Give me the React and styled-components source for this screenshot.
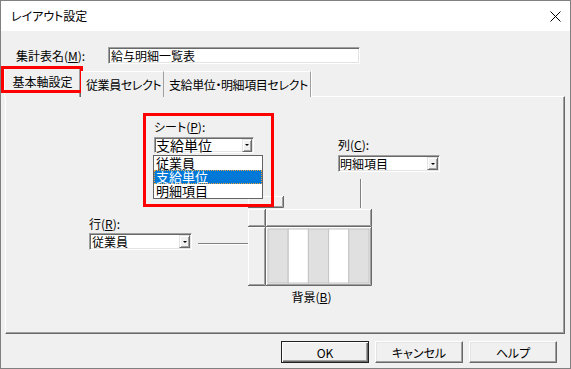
import React from 'react';
import styled, { createGlobalStyle } from 'styled-components';

const GlobalStyle = createGlobalStyle`
  html, body {
    margin: 0;
    padding: 0;
    background: #f0f0f0;
  }
  body {
    font-family: "Noto Sans CJK JP", "Noto Sans", sans-serif;
    font-size: 12px;
    color: #000;
    font-feature-settings: "palt";
  }
`;

/* window frame */
const Window = styled.div`
  width: 571px;
  height: 369px;
  box-sizing: border-box;
  border: 1px solid #808080;
  background: #f0f0f0;
  display: flex;
  flex-direction: column;
`;

const TitleBar = styled.div`
  height: 30px;
  flex: none;
  background: #fff;
  display: flex;
  align-items: center;
  justify-content: space-between;
  padding: 0 9px 0 10px;
`;

const Title = styled.span`
  line-height: 14px;
`;

const CloseIcon = () => (
  <svg width="11" height="11" viewBox="0 0 11 11">
    <path d="M0.5 0.5L10.5 10.5M10.5 0.5L0.5 10.5" stroke="#000" strokeWidth="1" fill="none" />
  </svg>
);

/* name row */
const NameRow = styled.div`
  display: flex;
  align-items: center;
  margin-top: 16px;
  padding-left: 15px;
`;

const Label = styled.div`
  width: ${(p) => (p.$w ? `${p.$w}px` : 'auto')};
  height: 14px;
  line-height: 14px;
  white-space: nowrap;
`;

const Sunken = styled.div`
  box-sizing: border-box;
  width: ${(p) => p.$w}px;
  height: ${(p) => p.$h}px;
  background: #fff;
  border: 1px solid;
  border-color: #a0a0a0 #fff #fff #a0a0a0;
  box-shadow: inset 1px 1px 0 #696969, inset -1px -1px 0 #e3e3e3;
  display: flex;
  align-items: center;
  justify-content: space-between;
  padding: 0 1px 0 ${(p) => p.$pad || 1}px;
  font-size: ${(p) => (p.$big ? 14 : 12)}px;
  line-height: 14px;
  white-space: nowrap;
`;

const DropButton = styled.div`
  width: ${(p) => p.$w || 11}px;
  height: 13px;
  box-sizing: border-box;
  background: #f0f0f0;
  border: 1px solid;
  border-color: #e3e3e3 #696969 #696969 #e3e3e3;
  box-shadow: inset 1px 1px 0 #fff, inset -1px -1px 0 #a0a0a0;
  display: flex;
  align-items: center;
  justify-content: center;
  &::after {
    content: '';
    width: 0;
    height: 0;
    border-left: 2px solid transparent;
    border-right: 2px solid transparent;
    border-top: 2px solid #000;
  }
`;

/* tabs */
const TabStrip = styled.div`
  display: flex;
  align-items: flex-end;
  height: 29px;
  margin-top: 4px;
  padding-left: 3px;
  margin-bottom: -1px;
  position: relative;
  z-index: 2;
`;

const Tab = styled.div`
  box-sizing: border-box;
  width: ${(p) => p.$w}px;
  height: ${(p) => (p.$active ? 30 : 26)}px;
  line-height: ${(p) => (p.$active ? 28 : 26)}px;
  padding-left: ${(p) => (p.$active ? 0 : 5)}px;
  text-align: ${(p) => (p.$active ? 'center' : 'left')};
  letter-spacing: ${(p) => (p.$active ? 0 : -0.4)}px;
  background: #f0f0f0;
  white-space: nowrap;
  position: relative;
  border-top: 1px solid #fff;
  border-left: ${(p) => (p.$active ? '1px solid #fff' : 'none')};
  border-right: 1px solid ${(p) => (p.$active ? '#696969' : '#a0a0a0')};
  box-shadow: ${(p) => (p.$active ? 'inset -1px 0 0 #a0a0a0' : '1px 0 0 #fff')};
  ${(p) =>
    p.$marked &&
    `&::after {
      content: '';
      position: absolute;
      left: -4px;
      top: -2px;
      width: 82px;
      height: 27px;
      box-sizing: border-box;
      border: 3px solid #ff0000;
      pointer-events: none;
    }`}
`;

const Panel = styled.div`
  box-sizing: border-box;
  height: 238px;
  margin: 0 5px 0 4px;
  border: 1px solid;
  border-color: #fff #696969 #696969 #fff;
  box-shadow: inset -1px -1px 0 #a0a0a0;
  display: flex;
  flex-direction: column;
`;

const UpperRow = styled.div`
  display: flex;
  align-items: flex-start;
  padding: 23px 0 0 148px;
`;

const Group = styled.div`
  display: flex;
  flex-direction: column;
  gap: ${(p) => p.$gap || 3}px;
  margin-left: ${(p) => p.$ml || 0}px;
  margin-top: ${(p) => p.$mt || 0}px;
  position: relative;
`;

const Highlight = styled.div`
  position: absolute;
  left: -11px;
  top: -7px;
  width: 131px;
  height: 94px;
  box-sizing: border-box;
  border: 3px solid #ff0000;
  pointer-events: none;
  z-index: 3;
`;

const DropList = styled.div`
  position: absolute;
  left: -1px;
  top: 35px;
  width: 110px;
  box-sizing: border-box;
  border: 1px solid #646464;
  background: #fff;
  z-index: 2;
`;

const ListItem = styled.div`
  box-sizing: border-box;
  height: 14px;
  line-height: 12px;
  font-size: 13px;
  padding-left: 1px;
  white-space: nowrap;
  background: ${(p) => (p.$sel ? '#0078d7' : '#fff')};
  color: ${(p) => (p.$sel ? '#fff' : '#000')};
  border: 1px dotted ${(p) => (p.$sel ? '#e8a33c' : 'transparent')};
`;

const LowerRow = styled.div`
  display: flex;
  align-items: flex-start;
  margin-top: 7px;
`;

const Connector = styled.div`
  width: 50px;
  height: 1px;
  margin: 64px 0 0 6px;
  background: #808080;
  border-bottom: 1px solid #fff;
`;

const PreviewBlock = styled.div`
  display: flex;
  flex-direction: column;
  align-items: center;
  width: 124px;
`;

const Caption = styled.div`
  margin-top: 4px;
  padding-left: 3px;
  line-height: 14px;
`;

const Footer = styled.div`
  display: flex;
  justify-content: flex-end;
  gap: 6px;
  margin-top: 7px;
  padding-right: 13px;
`;

const Button = styled.button`
  width: 88px;
  height: 22px;
  box-sizing: border-box;
  padding: 0;
  font-family: inherit;
  font-size: 12px;
  font-feature-settings: "palt";
  color: #000;
  background: #f0f0f0;
  border: 1px solid;
  border-color: ${(p) => (p.$default ? '#202020' : '#fff #696969 #696969 #fff')};
  box-shadow: ${(p) =>
    p.$default
      ? 'inset 1px 1px 0 #fff, inset -1px -1px 0 #696969, inset -2px -2px 0 #a0a0a0'
      : 'inset -1px -1px 0 #a0a0a0, inset 1px 1px 0 #e3e3e3'};
`;

/* drawing of the table preview */
const Raised = ({ x, y, w, h }) => (
  <g>
    <rect x={x} y={y} width={w} height={h} fill="#f0f0f0" />
    <path d={`M${x + 0.5} ${y + h - 1}V${y + 0.5}H${x + w - 1}`} stroke="#fff" fill="none" />
    <path d={`M${x} ${y + h - 0.5}H${x + w - 0.5}V${y}`} stroke="#696969" fill="none" />
    <path d={`M${x + 1} ${y + h - 1.5}H${x + w - 1.5}V${y + 1}`} stroke="#a0a0a0" fill="none" />
  </g>
);

const stripes = ['#e0e0e0', '#fff', '#e0e0e0', '#fff', '#e0e0e0'];

const Preview = () => (
  <svg width="124" height="107" viewBox="0 0 124 107">
    <path d="M112.5 0V29" stroke="#808080" />
    <path d="M113.5 0V29" stroke="#fff" />
    <Raised x={0} y={17} w={36} h={12} />
    <Raised x={0} y={30} w={18} h={18} />
    <Raised x={18} y={30} w={106} h={18} />
    <Raised x={0} y={48} w={18} h={59} />
    <Raised x={18} y={48} w={106} h={59} />
    {stripes.map((c, i) => (
      <rect key={i} x={20 + i * 20.2} y={50} width={20.2} height={54} fill={c} stroke="#c4c4c4" strokeWidth="1" />
    ))}
  </svg>
);

const Combo = ({ w, h = 17, big, pad, btn, children }) => (
  <Sunken $w={w} $h={h} $big={big} $pad={pad}>
    <span>{children}</span>
    <DropButton $w={btn} />
  </Sunken>
);

export default function App() {
  return (
    <>
      <GlobalStyle />
      <Window>
        <TitleBar>
          <Title>レイアウト設定</Title>
          <CloseIcon />
        </TitleBar>

        <NameRow>
          <Label $w={92}>
            集計表名(<u>M</u>):
          </Label>
          <Sunken $w={252} $h={17} $pad={2}>
            給与明細一覧表
          </Sunken>
        </NameRow>

        <TabStrip>
          <Tab $w={77} $active $marked>基本軸設定</Tab>
          <Tab $w={83}>従業員セレクト</Tab>
          <Tab $w={147}>支給単位・明細項目セレクト</Tab>
        </TabStrip>

        <Panel>
          <UpperRow>
            <Group>
              <Label>
                シート(<u>P</u>):
              </Label>
              <Combo w={100} h={16} big btn={10}>
                支給単位
              </Combo>
              <DropList>
                <ListItem>従業員</ListItem>
                <ListItem $sel>支給単位</ListItem>
                <ListItem>明細項目</ListItem>
              </DropList>
              <Highlight />
            </Group>
            <Group $ml={84} $mt={18}>
              <Label>
                列(<u>C</u>):
              </Label>
              <Combo w={102}>明細項目</Combo>
            </Group>
          </UpperRow>

          <LowerRow>
            <Group $ml={83} $mt={38} $gap={2}>
              <Label>
                行(<u>R</u>):
              </Label>
              <Combo w={103} pad={2}>従業員</Combo>
            </Group>
            <Connector />
            <PreviewBlock>
              <Preview />
              <Caption>
                背景(<u>B</u>)
              </Caption>
            </PreviewBlock>
          </LowerRow>
        </Panel>

        <Footer>
          <Button $default>OK</Button>
          <Button>キャンセル</Button>
          <Button>ヘルプ</Button>
        </Footer>
      </Window>
    </>
  );
}
